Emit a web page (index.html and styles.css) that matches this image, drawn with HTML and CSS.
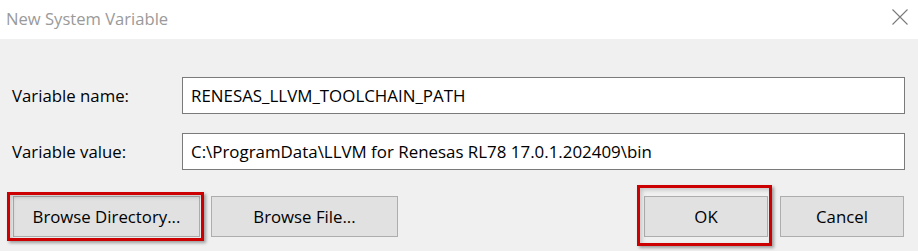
FILE: index.html
```html
<!DOCTYPE html>
<html>
<head>
<meta charset="utf-8">
<link rel="stylesheet" href="styles.css">
</head>
<body>
<div class="window">
  <div class="titlebar">
    <span class="title">New System Variable</span>
    <svg class="close" width="16" height="16" viewBox="0 0 16 16"><path d="M0.5 0.5 L15.5 15.5 M15.5 0.5 L0.5 15.5" stroke="#7a7a7a" stroke-width="1.1" fill="none"/></svg>
  </div>
  <div class="content">
    <div class="row">
      <label class="label">Variable name:</label>
      <div class="input">RENESAS_LLVM_TOOLCHAIN_PATH</div>
    </div>
    <div class="row row2">
      <label class="label">Variable value:</label>
      <div class="input">C:\ProgramData\LLVM for Renesas RL78 17.0.1.202409\bin</div>
    </div>
    <div class="buttons">
      <div class="group">
        <button class="btn wide marked mark-dir">Browse Directory...</button>
        <button class="btn wide">Browse File...</button>
      </div>
      <div class="group right">
        <button class="btn narrow marked mark-ok">OK</button>
        <button class="btn narrow">Cancel</button>
      </div>
    </div>
  </div>
</div>
</body>
</html>
```
FILE: styles.css
```css
* { box-sizing: border-box; }
html, body { margin: 0; padding: 0; }
body {
  width: 918px;
  height: 251px;
  background: #f0f0f0;
  font-family: "Open Sans", "Noto Sans", sans-serif;
  color: #000;
  overflow: hidden;
}
.titlebar {
  height: 39px;
  background: #fff;
  display: flex;
  align-items: center;
  justify-content: space-between;
  padding: 0 11px 0 6px;
}
.title {
  font-size: 16.6px;
  color: #9a9a9a;
  margin-top: -2px;
}
.close { display: block; margin-top: -5px; margin-right: -1px; }
.content {
  padding: 38px 13px 0 12px;
}
.row {
  display: flex;
  align-items: center;
  height: 37px;
}
.row2 { margin-top: 19px; }
.label {
  width: 170px;
  font-size: 16.8px;
}
.input {
  flex: 1;
  height: 37px;
  background: #fff;
  border: 1px solid #7a7a7a;
  padding: 0 8px;
  font-size: 16.9px;
  line-height: 35px;
  white-space: nowrap;
}
.buttons {
  margin-top: 26px;
  display: flex;
  justify-content: space-between;
  padding-left: 1px;
}
.group { display: flex; gap: 11px; }
.group.right { gap: 12px; margin-right: 1px; }
.btn {
  position: relative;
  height: 41px;
  background: #e1e1e1;
  border: 1px solid #adadad;
  font-family: inherit;
  font-size: 16.8px;
  color: #000;
  padding: 0;
}
.wide { width: 187px; }
.narrow { width: 124px; }
.marked::after {
  content: "";
  position: absolute;
  border: 3px solid #cc0000;
  box-shadow: 2px 2px 3px rgba(0,0,0,0.35), inset 2px 2px 4px rgba(0,0,0,0.18);
  pointer-events: none;
}
.mark-dir::after { left: -7px; top: -5px; right: -5px; bottom: -5px; }
.mark-ok::after { left: -8px; top: -12px; right: -5px; bottom: -10px; }
```
